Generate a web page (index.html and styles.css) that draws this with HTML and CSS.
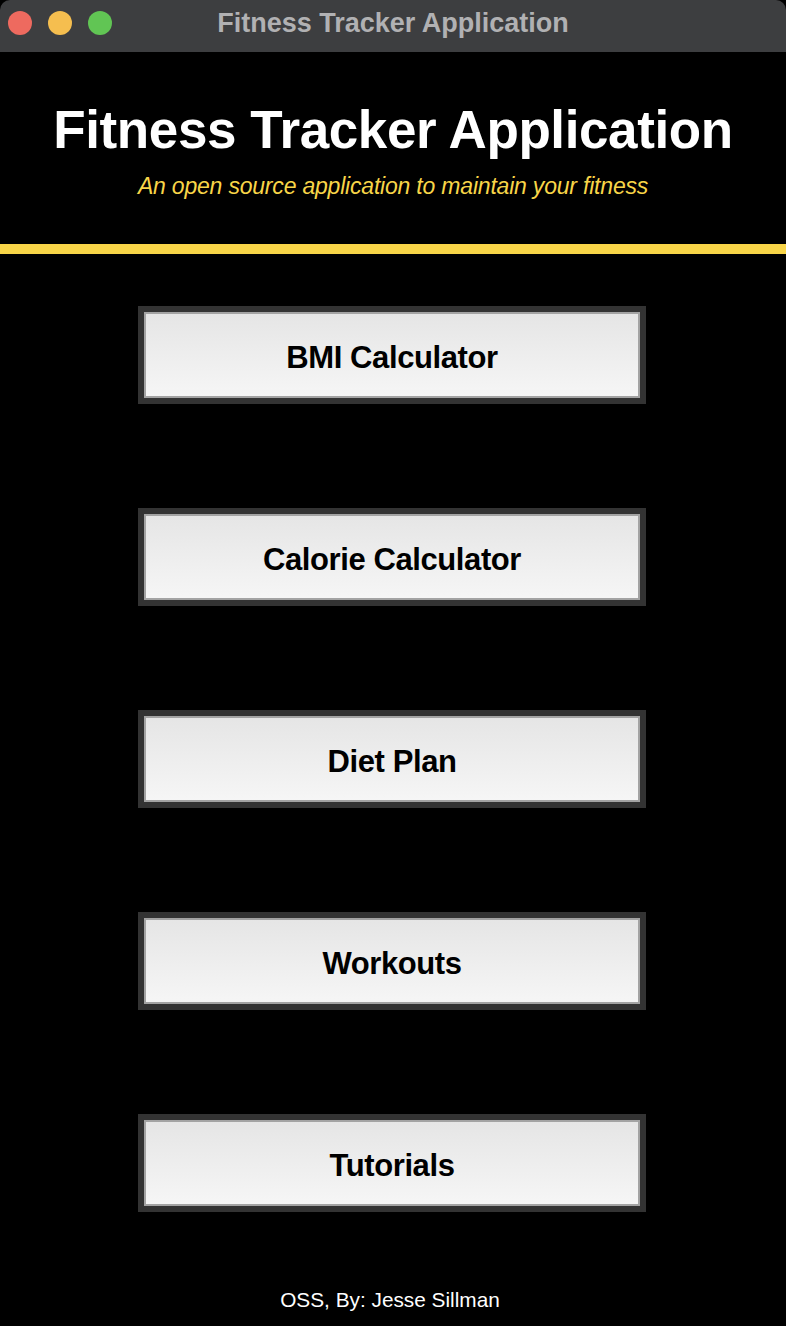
FILE: index.html
```html
<!DOCTYPE html>
<html>
<head>
<meta charset="utf-8">
<title>Fitness Tracker Application</title>
<link rel="stylesheet" href="styles.css">
</head>
<body>
<div class="window">
  <div class="titlebar">
    <div class="lights">
      <span class="light red"></span>
      <span class="light yellow"></span>
      <span class="light green"></span>
    </div>
    <div class="wintitle">Fitness Tracker Application</div>
  </div>
  <header class="header">
    <h1 class="title">Fitness Tracker Application</h1>
    <p class="subtitle">An open source application to maintain your fitness</p>
  </header>
  <div class="rule"></div>
  <main class="menu">
    <button class="btn">BMI Calculator</button>
    <button class="btn">Calorie Calculator</button>
    <button class="btn">Diet Plan</button>
    <button class="btn">Workouts</button>
    <button class="btn">Tutorials</button>
  </main>
  <footer class="footer">OSS, By: Jesse Sillman</footer>
</div>
</body>
</html>
```
FILE: styles.css
```css
html, body {
  margin: 0;
  padding: 0;
  background: #000;
}
.window {
  width: 786px;
  height: 1326px;
  background: #000;
  font-family: "Liberation Sans", Arial, sans-serif;
  display: flex;
  flex-direction: column;
  overflow: hidden;
}
.titlebar {
  height: 52px;
  background: #3d3e40;
  border-radius: 10px 10px 0 0;
  position: relative;
  display: flex;
  align-items: center;
  justify-content: center;
  flex-shrink: 0;
}
.lights {
  position: absolute;
  left: 8px;
  top: 11px;
  display: flex;
  gap: 16px;
}
.light {
  width: 24px;
  height: 24px;
  border-radius: 50%;
  display: block;
}
.red { background: #ee6a5f; }
.yellow { background: #f5be4f; }
.green { background: #61c554; }
.wintitle {
  color: #b1b1b3;
  font-weight: bold;
  font-size: 27px;
  line-height: 31px;
  margin-top: -6px;
}
.header {
  display: flex;
  flex-direction: column;
  align-items: center;
  padding-top: 48px;
  height: 192px;
  box-sizing: border-box;
  flex-shrink: 0;
}
.title {
  margin: 0;
  color: #fff;
  font-size: 53px;
  font-weight: bold;
  line-height: 60px;
  letter-spacing: -0.4px;
}
.subtitle {
  margin: 14px 0 0;
  color: #f8d548;
  font-style: italic;
  font-size: 23px;
  line-height: 24px;
  letter-spacing: -0.2px;
}
.rule {
  height: 10px;
  background: #f8d548;
  flex-shrink: 0;
}
.menu {
  display: flex;
  flex-direction: column;
  align-items: center;
  gap: 104px;
  padding-top: 52px;
  padding-right: 2px;
}
.btn {
  width: 508px;
  height: 98px;
  box-sizing: border-box;
  border: 6px solid #333333;
  box-shadow: inset 0 0 0 2px #a3a3a3;
  background: linear-gradient(#e5e5e5, #f6f6f6);
  font-family: "Liberation Sans", Arial, sans-serif;
  font-weight: bold;
  font-size: 31px;
  letter-spacing: -0.4px;
  color: #000;
  padding: 5px 0 0;
  margin: 0;
  cursor: pointer;
}
.footer {
  margin-top: auto;
  padding-bottom: 14px;
  padding-right: 6px;
  text-align: center;
  color: #fff;
  font-size: 20.8px;
}
```
